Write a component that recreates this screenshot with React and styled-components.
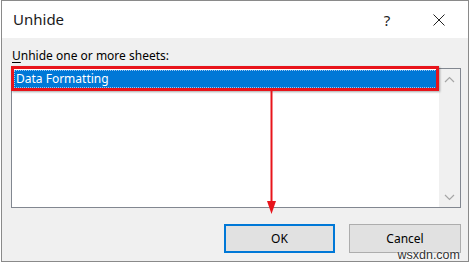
import React from 'react';
import styled, { createGlobalStyle } from 'styled-components';

const GlobalStyle = createGlobalStyle`
  html, body {
    margin: 0;
    padding: 0;
    background: #ffffff;
  }
  body {
    font-family: 'Segoe UI', 'Noto Sans', sans-serif;
  }
`;

const Window = styled.div`
  position: relative;
  box-sizing: border-box;
  margin-left: 1px;
  width: 468px;
  height: 262px;
  border: 1px solid #8a8a8a;
  background: #f0f0f0;
  display: flex;
  flex-direction: column;
`;

const TitleBar = styled.div`
  height: 37px;
  background: #ffffff;
  display: flex;
  align-items: center;
  padding: 0 0 0 11px;
  color: #1a1a1a;
`;

const Title = styled.div`
  flex: 1;
  font-size: 15px;
  margin-top: -2px;
`;

const TitleButton = styled.div`
  width: ${(p) => p.w}px;
  height: 37px;
  display: flex;
  align-items: center;
  justify-content: center;
  font-size: 15px;
  color: #222;
`;

const Body = styled.div`
  position: relative;
  flex: 1;
  padding: 9px 7px 0 9px;
  display: flex;
  flex-direction: column;
`;

const Label = styled.div`
  font-size: 12px;
  color: #000;
  height: 21px;
  line-height: 17px;
  padding-left: 1px;
  & u {
    text-decoration: underline;
    text-underline-offset: 2px;
  }
`;

const ListBox = styled.div`
  box-sizing: border-box;
  width: 450px;
  height: 140px;
  border: 1px solid #828790;
  background: #ffffff;
  display: flex;
`;

const ListArea = styled.div`
  flex: 1;
  padding: 1px 2px;
`;

const Row = styled.div`
  height: 18px;
  line-height: 17px;
  font-size: 12px;
  padding-left: 2px;
  color: ${(p) => (p.selected ? '#ffffff' : '#000')};
  background: ${(p) => (p.selected ? '#0078d7' : 'transparent')};
  outline: ${(p) => (p.selected ? '1px dotted #9cc6f0' : 'none')};
  outline-offset: -1px;
`;

const ScrollBar = styled.div`
  width: 21px;
  background: #f0f0f0;
  display: flex;
  flex-direction: column;
  justify-content: space-between;
  align-items: center;
  padding: 7px 0 6px;
`;

const ButtonRow = styled.div`
  display: flex;
  justify-content: flex-end;
  gap: 14px;
  margin-top: 16px;
`;

const Button = styled.div`
  box-sizing: border-box;
  width: ${(p) => p.w}px;
  height: 29px;
  background: #e1e1e1;
  border: ${(p) => (p.primary ? '2px solid #0078d7' : '1px solid #adadad')};
  display: flex;
  align-items: center;
  justify-content: center;
  font-size: 12px;
  color: #000;
`;

const Highlight = styled.div`
  position: absolute;
  left: 9px;
  top: 28px;
  width: 428px;
  height: 25px;
  box-sizing: border-box;
  border: 3px solid #e8141b;
  box-shadow: 1px 1px 2px rgba(0, 0, 0, 0.35);
  pointer-events: none;
`;

const Arrow = styled.svg`
  position: absolute;
  left: 263px;
  top: 53px;
  overflow: visible;
`;

const Watermark = styled.div`
  position: absolute;
  right: 8px;
  bottom: -1px;
  font-family: 'Liberation Sans', Arial, sans-serif;
  font-size: 12.5px;
  color: #333;
  text-shadow: 0 0 2px #fff, 0 0 2px #fff;
`;

const Chevron = ({ up }) => (
  <svg width="11" height="7" viewBox="0 0 11 7">
    <path
      d={up ? 'M1 6 L5.5 1.5 L10 6' : 'M1 1 L5.5 5.5 L10 1'}
      fill="none"
      stroke="#a6a6a6"
      strokeWidth="1.2"
    />
  </svg>
);

const sheets = ['Data Formatting'];

const App = () => {
  return (
    <>
      <GlobalStyle />
      <Window>
        <TitleBar>
          <Title>Unhide</Title>
          <TitleButton w={46}>?</TitleButton>
          <TitleButton w={58}>
            <svg width="12" height="12" viewBox="0 0 12 12">
              <path d="M0.5 0.5 L11.5 11.5 M11.5 0.5 L0.5 11.5" stroke="#222" strokeWidth="1" />
            </svg>
          </TitleButton>
        </TitleBar>
        <Body>
          <Label>
            <u>U</u>nhide one or more sheets:
          </Label>
          <ListBox>
            <ListArea>
              {sheets.map((s, i) => (
                <Row key={s} selected={i === 0}>
                  {s}
                </Row>
              ))}
            </ListArea>
            <ScrollBar>
              <Chevron up />
              <Chevron />
            </ScrollBar>
          </ListBox>
          <ButtonRow>
            <Button w={111} primary>OK</Button>
            <Button w={112}>Cancel</Button>
          </ButtonRow>
          <Highlight />
          <Arrow width="14" height="123">
            <line x1="6.5" y1="0" x2="6.5" y2="112" stroke="#e8141b" strokeWidth="2" />
            <path d="M2 110 L11 110 L6.5 123 Z" fill="#e8141b" />
          </Arrow>
        </Body>
        <Watermark>wsxdn.com</Watermark>
      </Window>
    </>
  );
};

export default App;
